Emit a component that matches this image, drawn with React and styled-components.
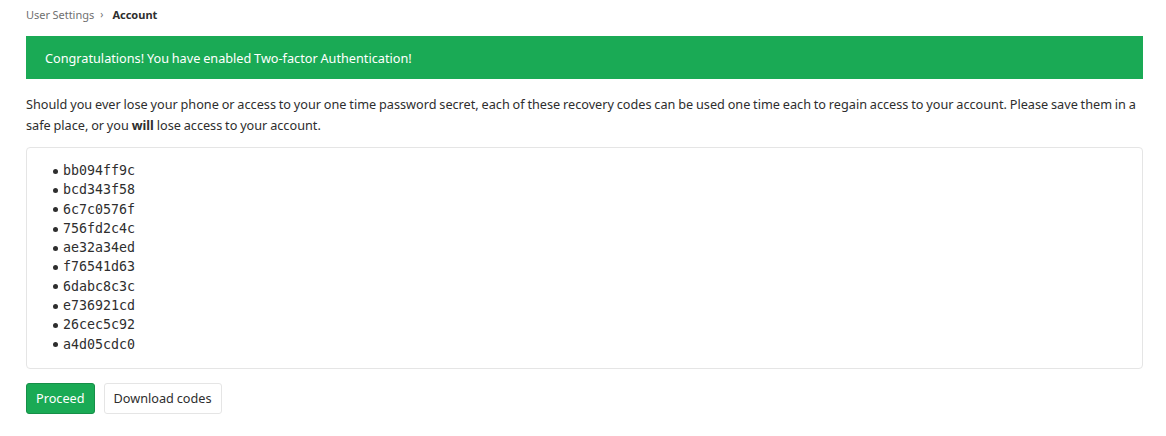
import React from "react";
import styled, { createGlobalStyle } from "styled-components";

const GlobalStyle = createGlobalStyle`
  body {
    margin: 0;
    background: #fff;
    font-family: "Noto Sans", "Liberation Sans", sans-serif;
    color: #2e2e2e;
  }
`;

const Page = styled.div`
  padding: 0 23px 0 26px;
  word-spacing: -0.5px;
`;

// Pasek okruszków
const Breadcrumbs = styled.nav`
  display: flex;
  align-items: center;
  height: 28px;
  font-size: 11px;
  color: #707070;

  b {
    color: #2e2e2e;
    font-weight: 700;
  }
`;

const Chevron = styled.span`
  margin: 0 9px 0 6px;
  font-size: 10px;
  color: #707070;
`;

const Alert = styled.div`
  margin-top: 8px;
  background: #1aaa55;
  color: #fff;
  font-size: 12.7px;
  height: 43px;
  display: flex;
  align-items: center;
  padding: 0 19px;
`;

const Text = styled.p`
  margin: 15px 0 0;
  font-size: 12.7px;
  line-height: 21px;
  color: #2e2e2e;
`;

const Codes = styled.div`
  margin-top: 11px;
  border: 1px solid #e5e5e5;
  border-radius: 4px;
  padding: 13px 16px 14px;
`;

const CodeList = styled.ul`
  margin: 0;
  padding-left: 10px;
  list-style: none;
  font-family: "DejaVu Sans Mono", monospace;
  font-size: 13.3px;
  line-height: 19.3px;
  word-spacing: normal;
  color: #2e2e2e;
`;

const Code = styled.li`
  display: flex;
  align-items: center;

  &::before {
    content: "";
    width: 5px;
    height: 5px;
    border-radius: 50%;
    background: #2e2e2e;
    margin-right: 5px;
    margin-top: 1px;
  }
`;

const Actions = styled.div`
  display: flex;
  gap: 9px;
  margin-top: 14px;
`;

const Button = styled.button`
  font-family: "Noto Sans", "Liberation Sans", sans-serif;
  font-size: 12.7px;
  word-spacing: -0.5px;
  height: 31px;
  padding: 0 9px;
  border-radius: 3px;
  border: 1px solid ${({ $primary }) => ($primary ? "#168f48" : "#e5e5e5")};
  background: ${({ $primary }) => ($primary ? "#1aaa55" : "#fff")};
  color: ${({ $primary }) => ($primary ? "#fff" : "#2e2e2e")};
`;

const codes = [
  "bb094ff9c",
  "bcd343f58",
  "6c7c0576f",
  "756fd2c4c",
  "ae32a34ed",
  "f76541d63",
  "6dabc8c3c",
  "e736921cd",
  "26cec5c92",
  "a4d05cdc0",
];

export default function App() {
  return (
    <Page>
      <GlobalStyle />
      <Breadcrumbs>
        User Settings<Chevron>›</Chevron><b>Account</b>
      </Breadcrumbs>
      <Alert>Congratulations! You have enabled Two-factor Authentication!</Alert>
      <Text>
        Should you ever lose your phone or access to your one time password
        secret, each of these recovery codes can be used one time each to
        regain access to your account. Please save them in a safe place, or you{" "}
        <b>will</b> lose access to your account.
      </Text>
      <Codes>
        <CodeList>
          {codes.map((c) => (
            <Code key={c}>{c}</Code>
          ))}
        </CodeList>
      </Codes>
      <Actions>
        <Button $primary>Proceed</Button>
        <Button>Download codes</Button>
      </Actions>
    </Page>
  );
}
